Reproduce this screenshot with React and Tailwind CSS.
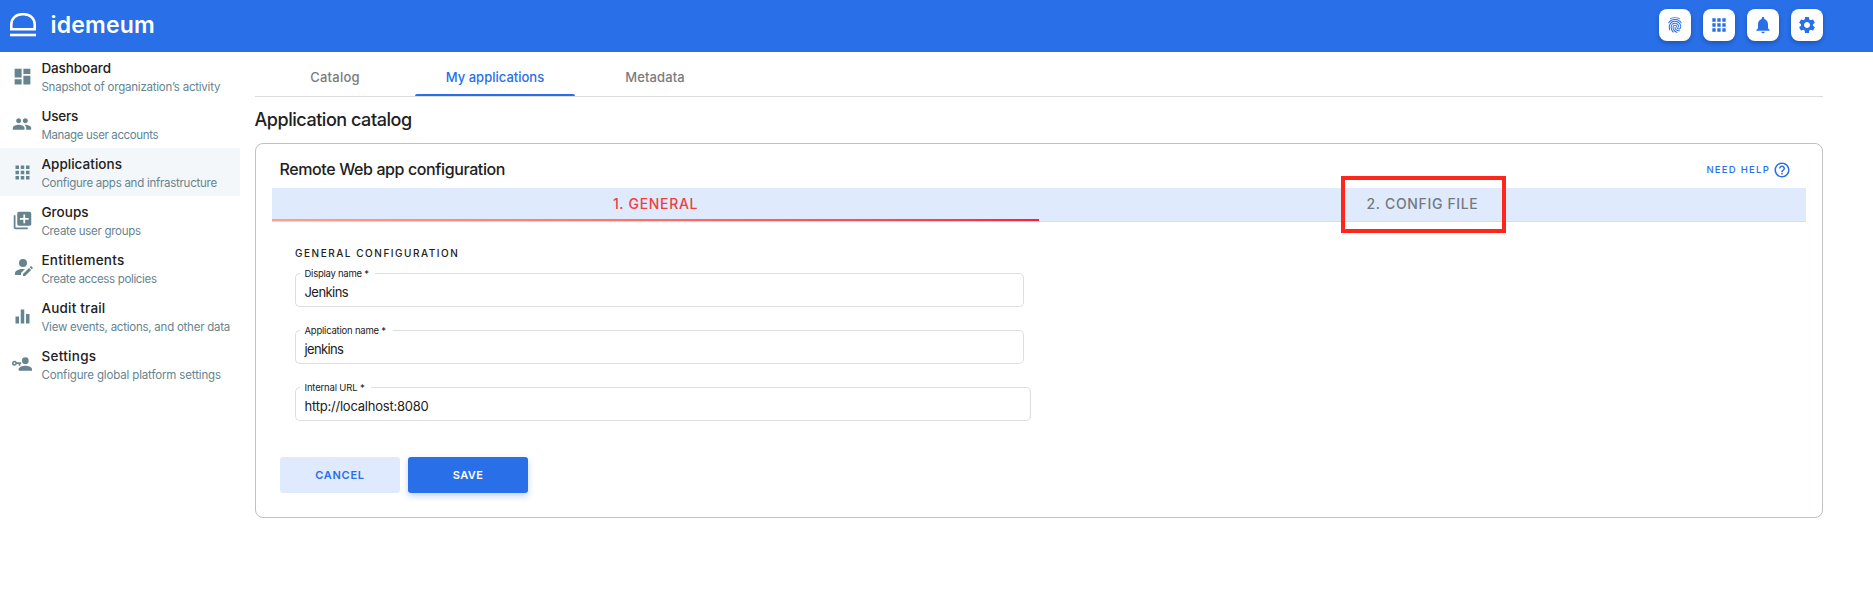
import React from "react";
import { MdDashboard, MdPeople, MdApps, MdLibraryAdd, MdEqualizer, MdNotifications, MdSettings, MdHelpOutline } from "react-icons/md";
import { IoMdFingerPrint } from "react-icons/io";

function AccountEdit({ className }) {
  return (
    <svg viewBox="0 0 24 24" fill="currentColor" className={className}>
      <path d="M21.7,13.35L20.7,14.35L18.65,12.3L19.65,11.3C19.86,11.09 20.21,11.09 20.42,11.3L21.7,12.58C21.91,12.79 21.91,13.14 21.7,13.35M12,18.94L18.06,12.88L20.11,14.93L14.06,21H12V18.94M12,14C7.58,14 4,15.79 4,18V20H10V18.11L14,14.11C13.34,14.03 12.67,14 12,14M12,4A4,4 0 0,0 8,8A4,4 0 0,0 12,12A4,4 0 0,0 16,8A4,4 0 0,0 12,4Z" />
    </svg>
  );
}

function AccountKey({ className }) {
  return (
    <svg viewBox="0 0 24 24" fill="currentColor" className={className}>
      <path d="M11,10V12H10V14H8V12H5.83C5.42,13.17 4.31,14 3,14A3,3 0 0,1 0,11A3,3 0 0,1 3,8C4.31,8 5.42,8.83 5.83,10H11M3,10A1,1 0 0,0 2,11A1,1 0 0,0 3,12A1,1 0 0,0 4,11A1,1 0 0,0 3,10M16,14C18.67,14 24,15.34 24,18V20H8V18C8,15.34 13.33,14 16,14M16,12A4,4 0 0,1 12,8A4,4 0 0,1 16,4A4,4 0 0,1 20,8A4,4 0 0,1 16,12Z" />
    </svg>
  );
}

const navItems = [
  { title: "Dashboard", sub: "Snapshot of organization’s activity", Icon: MdDashboard, size: "size-[21px]", ts: "tracking-[-0.1px]", ss: "tracking-[-0.22px]" },
  { title: "Users", sub: "Manage user accounts", Icon: MdPeople, size: "size-5", ts: "tracking-[-0.2px]", ss: "tracking-[-0.36px]" },
  { title: "Applications", sub: "Configure apps and infrastructure", Icon: MdApps, size: "size-[21px]", ts: "tracking-[0.03px]", ss: "tracking-[-0.26px]", active: true },
  { title: "Groups", sub: "Create user groups", Icon: MdLibraryAdd, size: "size-[21px]", ts: "tracking-[0.05px]", ss: "tracking-[-0.29px]" },
  { title: "Entitlements", sub: "Create access policies", Icon: AccountEdit, size: "size-6 -mt-[3px] ml-0.5", ts: "tracking-[0.26px]", ss: "tracking-[-0.34px]" },
  { title: "Audit trail", sub: "View events, actions, and other data", Icon: MdEqualizer, size: "size-[21px]", ts: "tracking-[0.2px]", ss: "tracking-[-0.24px]" },
  { title: "Settings", sub: "Configure global platform settings", Icon: AccountKey, size: "size-5", ts: "tracking-[0.3px]", ss: "tracking-[-0.15px]" },
];

const headerIcons = [
  { name: "Identity", Icon: IoMdFingerPrint, size: "size-[18px]" },
  { name: "Apps", Icon: MdApps, size: "size-[20px]" },
  { name: "Notifications", Icon: MdNotifications, size: "size-5" },
  { name: "Preferences", Icon: MdSettings, size: "size-5" },
];

const fields = [
  { label: "Display name *", value: "Jenkins", width: "w-[729px]", legend: "w-[75px]", ls: "tracking-[-0.25px]", vs: "tracking-[-0.55px]" },
  { label: "Application name *", value: "jenkins", width: "w-[729px]", legend: "w-[93px]", ls: "tracking-[-0.22px]", vs: "tracking-[-0.65px]" },
  { label: "Internal URL *", value: "http://localhost:8080", width: "w-[736px]", legend: "w-[71px]", ls: "tracking-[-0.17px]", vs: "tracking-[-0.22px]" },
];

function Header() {
  return (
    <header className="flex h-[52px] items-center justify-between bg-[#286fe8] pr-[50px] pl-[10px] text-white">
      <div className="flex items-center">
        <svg viewBox="0 0 26 24" fill="none" stroke="currentColor" strokeWidth="2.6" className="-mt-[2px] h-6 w-[26px]">
          <path d="M1.3 16.2V11.5C1.3 5.5 6 1.3 12 1.3H14C20 1.3 24.7 5.5 24.7 11.5V16.2Z" />
          <path d="M0 22H26" />
        </svg>
        <span className="-mt-[3px] ml-[14.5px] text-[23px] leading-8 font-semibold tracking-[0.2px]">idemeum</span>
      </div>
      <div className="-mt-[2px] flex gap-3">
        {headerIcons.map(({ name, Icon, size }) => (
          <button key={name} className="flex size-8 items-center justify-center rounded-lg bg-white text-[#286fe8] shadow-[0_2px_4px_rgba(0,0,0,0.25)]">
            <Icon className={size} />
          </button>
        ))}
      </div>
    </header>
  );
}

function Sidebar() {
  return (
    <nav className="w-60 shrink-0">
      {navItems.map(({ title, sub, Icon, size, ts, ss, active }) => (
        <div key={title} className={`flex h-12 ${active ? "bg-[#f3f7f9]" : ""}`}>
          <div className="flex w-11 shrink-0 items-center justify-center text-[#668490]">
            <Icon className={`shrink-0 ${size}`} />
          </div>
          <div className="-ml-[2.6px] pt-[7px] whitespace-nowrap">
            <div className={`text-[13.5px] leading-[18px] font-medium text-[#212121] ${ts}`}>{title}</div>
            <div className={`text-[11.5px] leading-5 text-[#668490] ${ss}`}>{sub}</div>
          </div>
        </div>
      ))}
    </nav>
  );
}

function Field({ label, value, width, legend, ls, vs }) {
  return (
    <div className={`flex h-[34px] ${width}`}>
      <div className="w-[5px] shrink-0 rounded-l-[5px] border border-r-0 border-[#dedede]" />
      <div className={`shrink-0 border-b border-[#dedede] pl-[4.5px] whitespace-nowrap text-[#212121] ${legend}`}>
        <div className={`-mt-[6px] text-[9.5px] leading-[14px] ${ls}`}>{label}</div>
        <div className={`mt-[2px] text-[13px] leading-[18px] ${vs}`}>{value}</div>
      </div>
      <div className="grow rounded-r-[5px] border border-l-0 border-[#dedede]" />
    </div>
  );
}

export default function App() {
  return (
    <div className="h-[613px] overflow-hidden bg-white font-['Inter','Liberation_Sans',sans-serif]">
      <Header />
      <div className="flex">
        <Sidebar />
        <main className="ml-[15px] w-[1568px]">
          <div className="flex h-[45px] border-b border-[#dcdcdc] text-center text-[13px] leading-[50px] font-medium text-[#7b7b7b]">
            <div className="w-40 tracking-[0.25px]">Catalog</div>
            <div className="flex w-40 flex-col justify-between text-[#286fe8]">
              <span className="h-[42px]">My applications</span>
              <span className="h-0.5 rounded-t-sm bg-[#286fe8]" />
            </div>
            <div className="w-40 tracking-[0.12px]">Metadata</div>
          </div>
          <h1 className="mt-[11px] -ml-[0.5px] h-[35px] text-[18px] leading-6 font-medium tracking-[-0.46px] text-[#212121]">Application catalog</h1>
          <section className="h-[375px] rounded-lg border border-[#bdc1c1] px-4">
            <div className="flex h-11 items-center justify-between pr-[15px] pl-[7.5px]">
              <h2 className="mt-[5px] text-[16px] leading-6 font-medium tracking-[-0.39px] text-[#212121]">Remote Web app configuration</h2>
              <div className="mt-[7px] flex items-center gap-[3px] text-[#286fe8]">
                <span className="text-[9.5px] leading-4 font-medium tracking-[1.25px]">NEED HELP</span>
                <MdHelpOutline className="size-[18px]" />
              </div>
            </div>
            <div className="flex h-[34px] border-b border-[#d9dee5] bg-[#dfebfd] text-center text-[14px] leading-8 font-medium">
              <div className="flex w-[767px] flex-col justify-between text-[#f23d3d]">
                <span className="h-[31px] tracking-[0.67px]">1. GENERAL</span>
                <span className="h-0.5 bg-linear-to-r from-[#fca08e] to-[#fb1c46]" />
              </div>
              <div className="relative w-[767px] tracking-[0.65px] text-[#75787f]">
                2. CONFIG FILE
                <span className="absolute -top-[12px] left-[302px] h-[57px] w-[165px] border-4 border-[#ff261b]" />
              </div>
            </div>
            <div className="pt-[24px] pl-[23px]">
              <h3 className="mb-[12px] text-[10px] leading-[15px] font-medium tracking-[1.53px] text-[#212121]">GENERAL CONFIGURATION</h3>
              <div className="flex flex-col gap-[23px]">
                {fields.map((f) => (
                  <Field key={f.label} {...f} />
                ))}
              </div>
            </div>
            <div className="mt-9 flex gap-2 pl-2 text-[11px] font-semibold">
              <button className="h-9 w-[120px] rounded-[3px] bg-[#e0eafe] tracking-[0.75px] text-[#286fe8]">CANCEL</button>
              <button className="h-9 w-[120px] rounded-[3px] bg-[#286fe8] tracking-[0.37px] text-white shadow-[0_3px_6px_rgba(40,111,232,0.3)]">SAVE</button>
            </div>
          </section>
        </main>
      </div>
    </div>
  );
}
